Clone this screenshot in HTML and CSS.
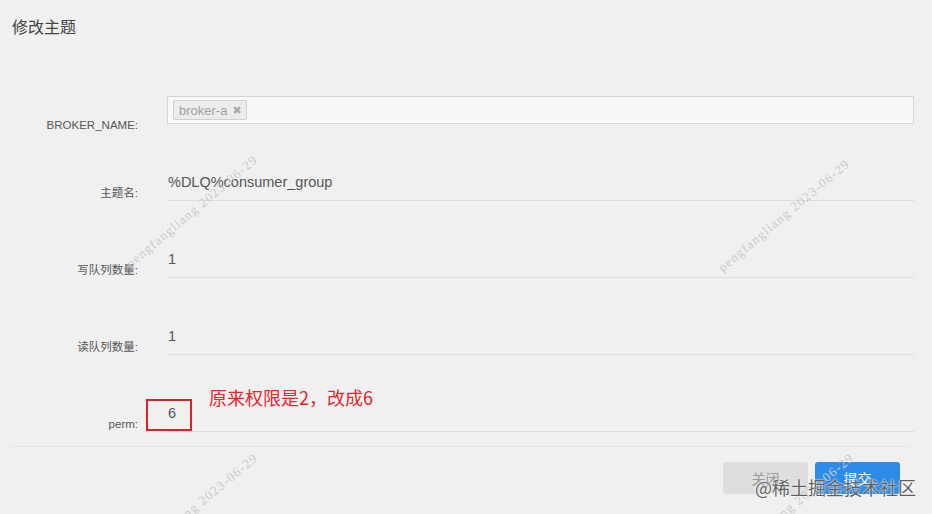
FILE: index.html
```html
<!DOCTYPE html>
<html>
<head>
    <title>修改主题</title>
    <link rel="stylesheet" href="styles.css">
</head>
<body>
    <div class="modal">
        <div class="modal-header">
            <h4>修改主题</h4>
        </div>

        <form class="modal-body">
            <div class="row row-first">
                <label>BROKER_NAME:</label>
                <div class="tag-input">
                    <span class="tag">broker-a <b>&#10006;</b></span>
                </div>
            </div>
            <div class="row">
                <label>主题名:</label>
                <div class="field">%DLQ%consumer_group</div>
            </div>
            <div class="row">
                <label>写队列数量:</label>
                <div class="field">1</div>
            </div>
            <div class="row">
                <label>读队列数量:</label>
                <div class="field">1</div>
            </div>
            <div class="row">
                <label>perm:</label>
                <div class="field">6</div>
            </div>
        </form>

        <div class="modal-footer">
            <button class="btn btn-close" type="button">关闭</button>
            <button class="btn btn-submit" type="button">提交</button>
        </div>

        <!-- annotation drawn on top of the screenshot -->
        <div class="mark-box"></div>
        <div class="mark-note">原来权限是2，改成6</div>

        <!-- watermarks -->
        <span class="wm wm-a">pengfangliang 2023-06-29</span>
        <span class="wm wm-b">pengfangliang 2023-06-29</span>
        <span class="wm wm-c">pengfangliang 2023-06-29</span>
        <span class="wm wm-d">pengfangliang 2023-06-29</span>
        <div class="site-mark">@稀土掘金技术社区</div>
    </div>
</body>
</html>
```

FILE: styles.css
```css
html, body { margin: 0; background: #f0f0f0; }
body { font-family: "Liberation Sans", "Noto Sans CJK SC", sans-serif; color: #333; }
.modal { position: relative; width: 932px; height: 514px; overflow: hidden; }

.modal-header { padding: 18px 12px 0; }
.modal-header h4 { margin: 0; font-size: 16px; line-height: 20px; font-weight: normal; color: #444; }

.modal-body { margin: 58px 18px 14px 0; }
.row { display: flex; align-items: flex-end; gap: 29px; height: 77px; }
.row label { width: 138px; flex: none; text-align: right; font-size: 11.5px; line-height: 14px; color: #555; margin-bottom: 1px; }
.row-first { height: 28px; }
.row-first label { margin-bottom: -8px; }

.tag-input { flex: 1; height: 26px; border: 1px solid #d6d6d6; background: #f8f8f8; display: flex; align-items: center; padding-left: 5px; }
.tag { display: inline-flex; align-items: center; gap: 5px; height: 18px; padding: 0 4px 0 5px; border: 1px solid #d0d0d0; border-radius: 2px; background: #ececec; font-size: 13px; color: #a0a0a0; }
.tag b { font-family: "DejaVu Sans", sans-serif; font-size: 11px; color: #aaa; }

.field { flex: 1; font-size: 14.5px; line-height: 20px; color: #555; padding: 0 0 8px 1px; border-bottom: 1px solid #dcdcdc; }

.modal-footer { margin: 0 22px 0 12px; border-top: 1px solid #e4e4e4; padding: 15px 10px 0 0; display: flex; justify-content: flex-end; gap: 7px; }
.btn { width: 85px; height: 32px; border: none; border-radius: 3px; font-family: "Noto Sans CJK SC", sans-serif; font-size: 14px; }
.btn-close { background: #dedede; color: #9a9a9a; }
.btn-submit { background: #2d8cea; color: #fff; }

.mark-box { position: absolute; left: 146px; top: 399px; width: 42px; height: 28px; border: 2px solid #d9232a; }
.mark-note { position: absolute; left: 209px; top: 385px; font-family: "Noto Sans CJK SC", sans-serif; font-size: 18px; line-height: 24px; color: #e5262b; }

.wm { position: absolute; font-family: "Liberation Serif", serif; font-size: 13px; line-height: 12px; letter-spacing: 1.2px; color: #cbcbcb; white-space: nowrap; transform-origin: 0 100%; transform: rotate(-40deg); }
.wm-a { left: 132px; top: 258px; }
.wm-b { left: 724px; top: 262px; }
.wm-c { left: 132px; top: 556px; }
.wm-d { left: 728px; top: 556px; }

.site-mark { position: absolute; left: 755px; top: 475px; white-space: nowrap; font-family: "Noto Sans CJK SC", sans-serif; font-size: 18px; line-height: 24px; color: #5f5f5f; text-shadow: 0 0 2px #fff, 0 0 1px #fff; }
```
